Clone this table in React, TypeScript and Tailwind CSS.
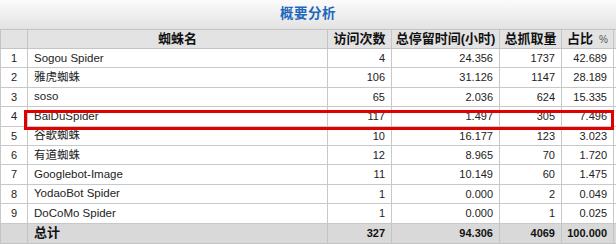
const rows: [number, string, number, string, number, string][] = [
  [1, "Sogou Spider", 4, "24.356", 1737, "42.689"],
  [2, "雅虎蜘蛛", 106, "31.126", 1147, "28.189"],
  [3, "soso", 65, "2.036", 624, "15.335"],
  [4, "BaiDuSpider", 117, "1.497", 305, "7.496"],
  [5, "谷歌蜘蛛", 10, "16.177", 123, "3.023"],
  [6, "有道蜘蛛", 12, "8.965", 70, "1.720"],
  [7, "Googlebot-Image", 11, "10.149", 60, "1.475"],
  [8, "YodaoBot Spider", 1, "0.000", 2, "0.049"],
  [9, "DoCoMo Spider", 1, "0.000", 1, "0.025"],
];

const font = "font-['Liberation_Sans','Noto_Sans_CJK_SC',sans-serif]";

const App = () => {
  return (
    <div className={`relative w-[616px] h-[244px] overflow-hidden bg-white ${font}`}>
      {/* title bar */}
      <div className="h-[29px] flex items-center justify-center bg-linear-to-b from-[#fbfbfb] to-[#e3e3e3]">
        <span className="text-[13.5px] font-bold text-[#1d68bd] tracking-[0.5px]">概要分析</span>
      </div>

      {/* header */}
      <div className="flex h-[20px] bg-[#e3e3e3] border-t border-b border-[#c4c4c4] text-[13px] font-bold text-[#111] box-border">
        <div className="w-[28px] border-l border-r border-[#c4c4c4]"></div>
        <div className="w-[300px] border-r border-[#c4c4c4] flex items-center justify-center">蜘蛛名</div>
        <div className="w-[64px] border-r border-[#c4c4c4] flex items-center justify-center">访问次数</div>
        <div className="w-[108px] border-r border-[#c4c4c4] flex items-center justify-center">总停留时间(小时)</div>
        <div className="w-[62px] border-r border-[#c4c4c4] flex items-center justify-center">总抓取量</div>
        <div className="w-[52px] border-r border-[#c4c4c4] flex items-center justify-center gap-[6px]">
          占比<span className="text-[10px] font-normal text-[#555]">%</span>
        </div>
      </div>

      {/* rows */}
      {rows.map((r) => (
        <div key={r[0]} className="flex h-[19.4px] border-b border-[#c8c8c8] text-[11px] text-[#222] box-border">
          <div className="w-[28px] border-l border-r border-[#c8c8c8] flex items-center justify-center">{r[0]}</div>
          <div className="w-[300px] border-r border-[#c8c8c8] flex items-center pl-[6px] text-[11.5px]">{r[1]}</div>
          <div className="w-[64px] border-r border-[#c8c8c8] flex items-center justify-end pr-[6px]">{r[2]}</div>
          <div className="w-[108px] border-r border-[#c8c8c8] flex items-center justify-end pr-[6px]">{r[3]}</div>
          <div className="w-[62px] border-r border-[#c8c8c8] flex items-center justify-end pr-[6px]">{r[4]}</div>
          <div className="w-[52px] border-r border-[#c8c8c8] flex items-center justify-end pr-[6px]">{r[5]}</div>
        </div>
      ))}

      {/* total */}
      <div className="flex h-[20px] bg-[#d9d9d9] border-b border-[#c4c4c4] text-[11px] font-bold text-[#111] box-border">
        <div className="w-[28px] border-l border-r border-[#c4c4c4]"></div>
        <div className="w-[300px] border-r border-[#c4c4c4] flex items-center pl-[6px] text-[13px]">总计</div>
        <div className="w-[64px] border-r border-[#c4c4c4] flex items-center justify-end pr-[6px]">327</div>
        <div className="w-[108px] border-r border-[#c4c4c4] flex items-center justify-end pr-[6px]">94.306</div>
        <div className="w-[62px] border-r border-[#c4c4c4] flex items-center justify-end pr-[6px]">4069</div>
        <div className="w-[52px] border-r border-[#c4c4c4] flex items-center justify-end pr-[6px]">100.000</div>
      </div>

      {/* highlight box over BaiDuSpider row */}
      <div className="absolute left-[24px] top-[110px] w-[590px] h-[20px] border-[3px] border-[#e00000]"></div>
    </div>
  );
};

export default App;
